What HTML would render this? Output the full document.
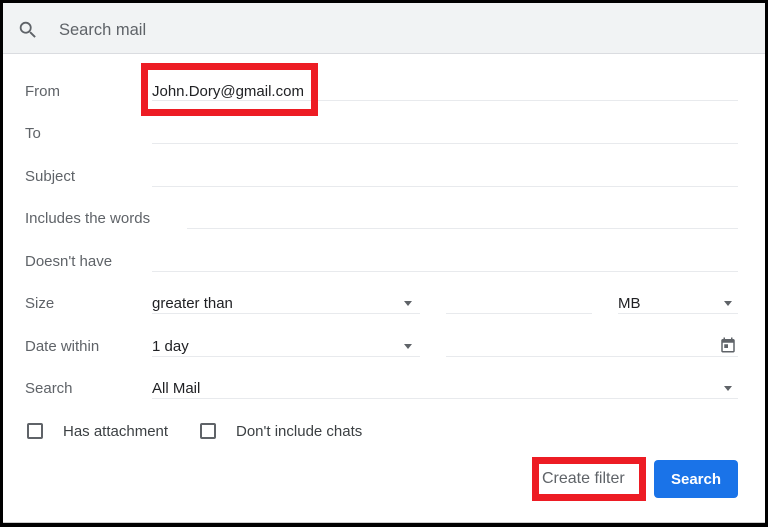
<!DOCTYPE html>
<html><head><style>
*{margin:0;padding:0;box-sizing:border-box}
body{width:768px;height:527px;background:#000;position:relative;overflow:hidden;font-family:"Liberation Sans",Arial,sans-serif}
.w{position:absolute;left:3px;top:3px;width:762px;height:520px;background:#fff;border-bottom:1px solid #ccc}
.bar{position:absolute;left:3px;top:3px;width:762px;height:51px;background:#f1f3f4;border-bottom:1px solid #dadce0}
.a{position:absolute}
.l{position:absolute;left:25px;font-size:15px;color:#5f6368}
.v{position:absolute;font-size:15px;color:#202124}
.u{position:absolute;height:1px;background:#e8eaed}
.tri{position:absolute;width:0;height:0;border-left:4.5px solid transparent;border-right:4.5px solid transparent;border-top:5px solid #5f6368}
.cb{position:absolute;width:16px;height:16px;border:2px solid #5f6368;border-radius:2px}
.red{position:absolute;border:7px solid #ed1c24}
</style></head><body>
<div class="w"></div>
<div class="bar"></div>
<svg class="a" style="left:17px;top:19px" width="22" height="22" viewBox="0 0 24 24"><path d="M15.5 14h-.79l-.28-.27A6.470 6.470 0 0 0 16 9.5 6.5 6.5 0 1 0 9.5 16c1.61 0 3.090-.59 4.23-1.57l.27.28v.79l5 4.99L20.49 19l-4.99-5zm-6 0C7.01 14 5 11.99 5 9.5S7.01 5 9.5 5 14 7.01 14 9.5 11.99 14 9.5 14z" fill="#5f6368"/></svg>
<div class="a" style="left:59px;top:21px;font-size:16.5px;color:#5f6368">Search mail</div>

<div class="l" style="top:83px">From</div>
<div class="u" style="left:152px;top:100px;width:586px"></div>
<div class="red" style="left:141px;top:63px;width:177px;height:53px"></div>
<div class="v" style="left:152px;top:83px">John.Dory@gmail.com</div>

<div class="l" style="top:125px">To</div>
<div class="u" style="left:152px;top:143px;width:586px"></div>
<div class="l" style="top:168px">Subject</div>
<div class="u" style="left:152px;top:186px;width:586px"></div>
<div class="l" style="top:210px">Includes the words</div>
<div class="u" style="left:187px;top:228px;width:551px"></div>
<div class="l" style="top:253px">Doesn't have</div>
<div class="u" style="left:152px;top:271px;width:586px"></div>

<div class="l" style="top:295px">Size</div>
<div class="v" style="left:152px;top:295px">greater than</div>
<div class="tri" style="left:404px;top:301px"></div>
<div class="u" style="left:152px;top:313px;width:268px"></div>
<div class="u" style="left:446px;top:313px;width:146px"></div>
<div class="v" style="left:618px;top:295px">MB</div>
<div class="tri" style="left:724px;top:301px"></div>
<div class="u" style="left:618px;top:313px;width:120px"></div>

<div class="l" style="top:338px">Date within</div>
<div class="v" style="left:152px;top:338px">1 day</div>
<div class="tri" style="left:404px;top:344px"></div>
<div class="u" style="left:152px;top:356px;width:268px"></div>
<div class="u" style="left:446px;top:356px;width:292px"></div>
<svg class="a" style="left:719px;top:336px" width="18" height="18" viewBox="0 0 24 24"><path d="M19 4h-1V2h-2v2H8V2H6v2H5c-1.1 0-2 .9-2 2v14c0 1.1.9 2 2 2h14c1.1 0 2-.9 2-2V6c0-1.1-.9-2-2-2zm0 16H5V9h14v11zM7 11h5v5H7z" fill="#5f6368"/></svg>

<div class="l" style="top:380px">Search</div>
<div class="v" style="left:152px;top:380px">All Mail</div>
<div class="tri" style="left:724px;top:386px"></div>
<div class="u" style="left:152px;top:398px;width:586px"></div>

<div class="cb" style="left:27px;top:423px"></div>
<div class="v" style="left:63px;top:423px;color:#3c4043">Has attachment</div>
<div class="cb" style="left:200px;top:423px"></div>
<div class="v" style="left:236px;top:423px;color:#3c4043">Don't include chats</div>

<div class="red" style="left:532px;top:457px;width:114px;height:44px"></div>
<div class="v" style="left:542px;top:470px;color:#5f6368;font-size:16px">Create filter</div>
<div class="a" style="left:654px;top:460px;width:84px;height:38px;background:#1a73e8;border-radius:4px;color:#fff;font-size:15px;font-weight:bold;text-align:center;line-height:39px">Search</div>
</body></html>
